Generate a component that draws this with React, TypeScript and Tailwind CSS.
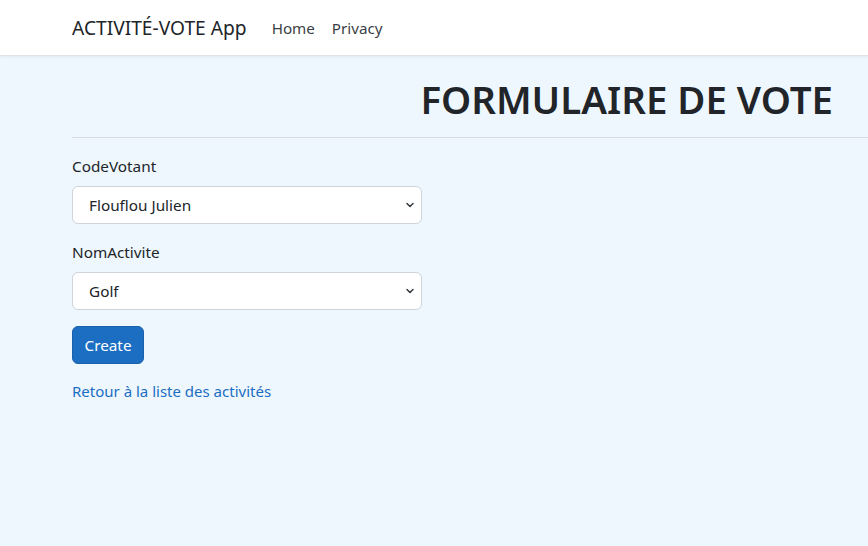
import { ChevronDown } from 'lucide-react';

const font = { fontFamily: '"Noto Sans", "Open Sans", sans-serif' };

export default function App(){
  return (
    <div className="min-h-[546px] bg-[#eff7fe] text-[#212529]" style={font}>
      {/* Navbar */}
      <nav className="h-[56px] bg-white border-b border-[#dfe3e8] shadow-[0_1px_3px_rgba(0,0,0,0.06)] flex items-center pl-[72px]">
        <span className="text-[19.2px] text-[#212529] mr-[25px] mt-[1px]">ACTIVITÉ-VOTE App</span>
        <a className="text-[15.2px] text-[#3b3f44] mr-[17px] mt-[1px]">Home</a>
        <a className="text-[15.2px] text-[#3b3f44] mt-[1px]">Privacy</a>
      </nav>

      <main className="pl-[72px]">
        <div className="flex justify-end pr-[35px] pt-[19px] pb-[14px]">
          <h1 className="text-[38.4px] font-semibold leading-[48px] text-[#212529]">FORMULAIRE DE VOTE</h1>
        </div>
        <hr className="border-t border-[#d6dce2]" />

        <form className="w-[350px] pt-[16px]">
          <Field label="CodeVotant" value="Flouflou Julien" />
          <Field label="NomActivite" value="Golf" />
          <button type="button" className="h-[38px] w-[72px] rounded-[6px] bg-[#1b6ec2] border border-[#1861ac] text-white text-[15.3px]">
            Create
          </button>
        </form>

        <a className="block mt-[16px] text-[15px] text-[#1b6ec2]">Retour à la liste des activités</a>
      </main>
    </div>
  );
}

function Field({ label, value }:{ label:string; value:string }){
  return (
    <div className="mb-[16px]">
      <label className="block text-[15.3px] leading-[24px] mb-[8px]">{label}</label>
      <div className="h-[38px] bg-white border border-[#ced4da] rounded-[6px] flex items-center justify-between pl-[16px] pr-[5px]">
        <span className="text-[15.3px] text-[#212529]">{value}</span>
        <ChevronDown size={12} strokeWidth={3} className="text-[#343a40]" />
      </div>
    </div>
  );
}
